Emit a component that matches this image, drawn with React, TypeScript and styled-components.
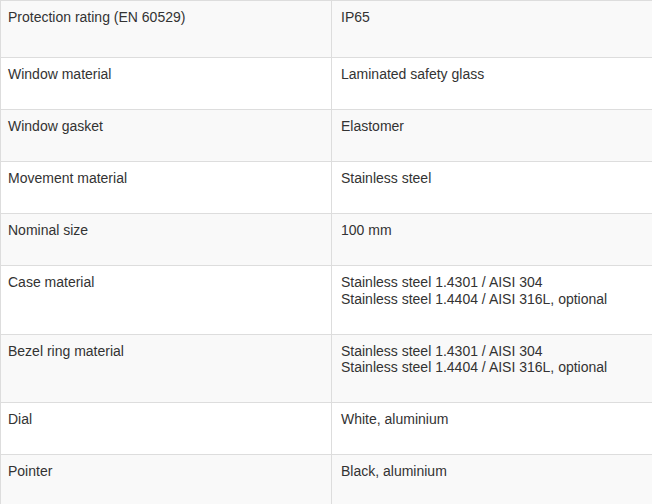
import React from "react";
import styled, { createGlobalStyle } from "styled-components";

const Global = createGlobalStyle`
  html, body { margin: 0; padding: 0; background: #ffffff; }
  body { font-family: "Liberation Sans", Arial, sans-serif; }
`;

const Table = styled.div`
  display: flex;
  flex-direction: column;
  border-top: 1px solid #dddddd;
  border-left: 1px solid #dddddd;
  width: 100%;
  box-sizing: border-box;
`;

const Row = styled.div<{ $striped: boolean; $tall?: boolean }>`
  display: grid;
  grid-template-columns: 330px 1fr;
  border-bottom: 1px solid #dddddd;
  background: ${(p) => (p.$striped ? "#f9f9f9" : "#ffffff")};
  min-height: ${(p) => (p.$tall ? "56px" : "auto")};
`;

const Cell = styled.div<{ $value?: boolean }>`
  font-size: 14px;
  line-height: 16.5px;
  color: #333333;
  padding: 8px ${(p) => (p.$value ? "9px" : "7px")} 26.5px;
  border-left: ${(p) => (p.$value ? "1px solid #dddddd" : "none")};
  white-space: nowrap;
`;

const rows: { label: string; value: string[] }[] = [
  { label: "Protection rating (EN 60529)", value: ["IP65"] },
  { label: "Window material", value: ["Laminated safety glass"] },
  { label: "Window gasket", value: ["Elastomer"] },
  { label: "Movement material", value: ["Stainless steel"] },
  { label: "Nominal size", value: ["100 mm"] },
  {
    label: "Case material",
    value: ["Stainless steel 1.4301 / AISI 304", "Stainless steel 1.4404 / AISI 316L, optional"],
  },
  {
    label: "Bezel ring material",
    value: ["Stainless steel 1.4301 / AISI 304", "Stainless steel 1.4404 / AISI 316L, optional"],
  },
  { label: "Dial", value: ["White, aluminium"] },
  { label: "Pointer", value: ["Black, aluminium"] },
];

export default function App() {
  return (
    <>
      <Global />
      <Table>
        {rows.map((r, i) => (
          <Row key={r.label} $striped={i % 2 === 0} $tall={i === 0}>
            <Cell>{r.label}</Cell>
            <Cell $value>
              {r.value.map((v, j) => (
                <React.Fragment key={j}>
                  {j > 0 && <br />}
                  {v}
                </React.Fragment>
              ))}
            </Cell>
          </Row>
        ))}
      </Table>
    </>
  );
}
